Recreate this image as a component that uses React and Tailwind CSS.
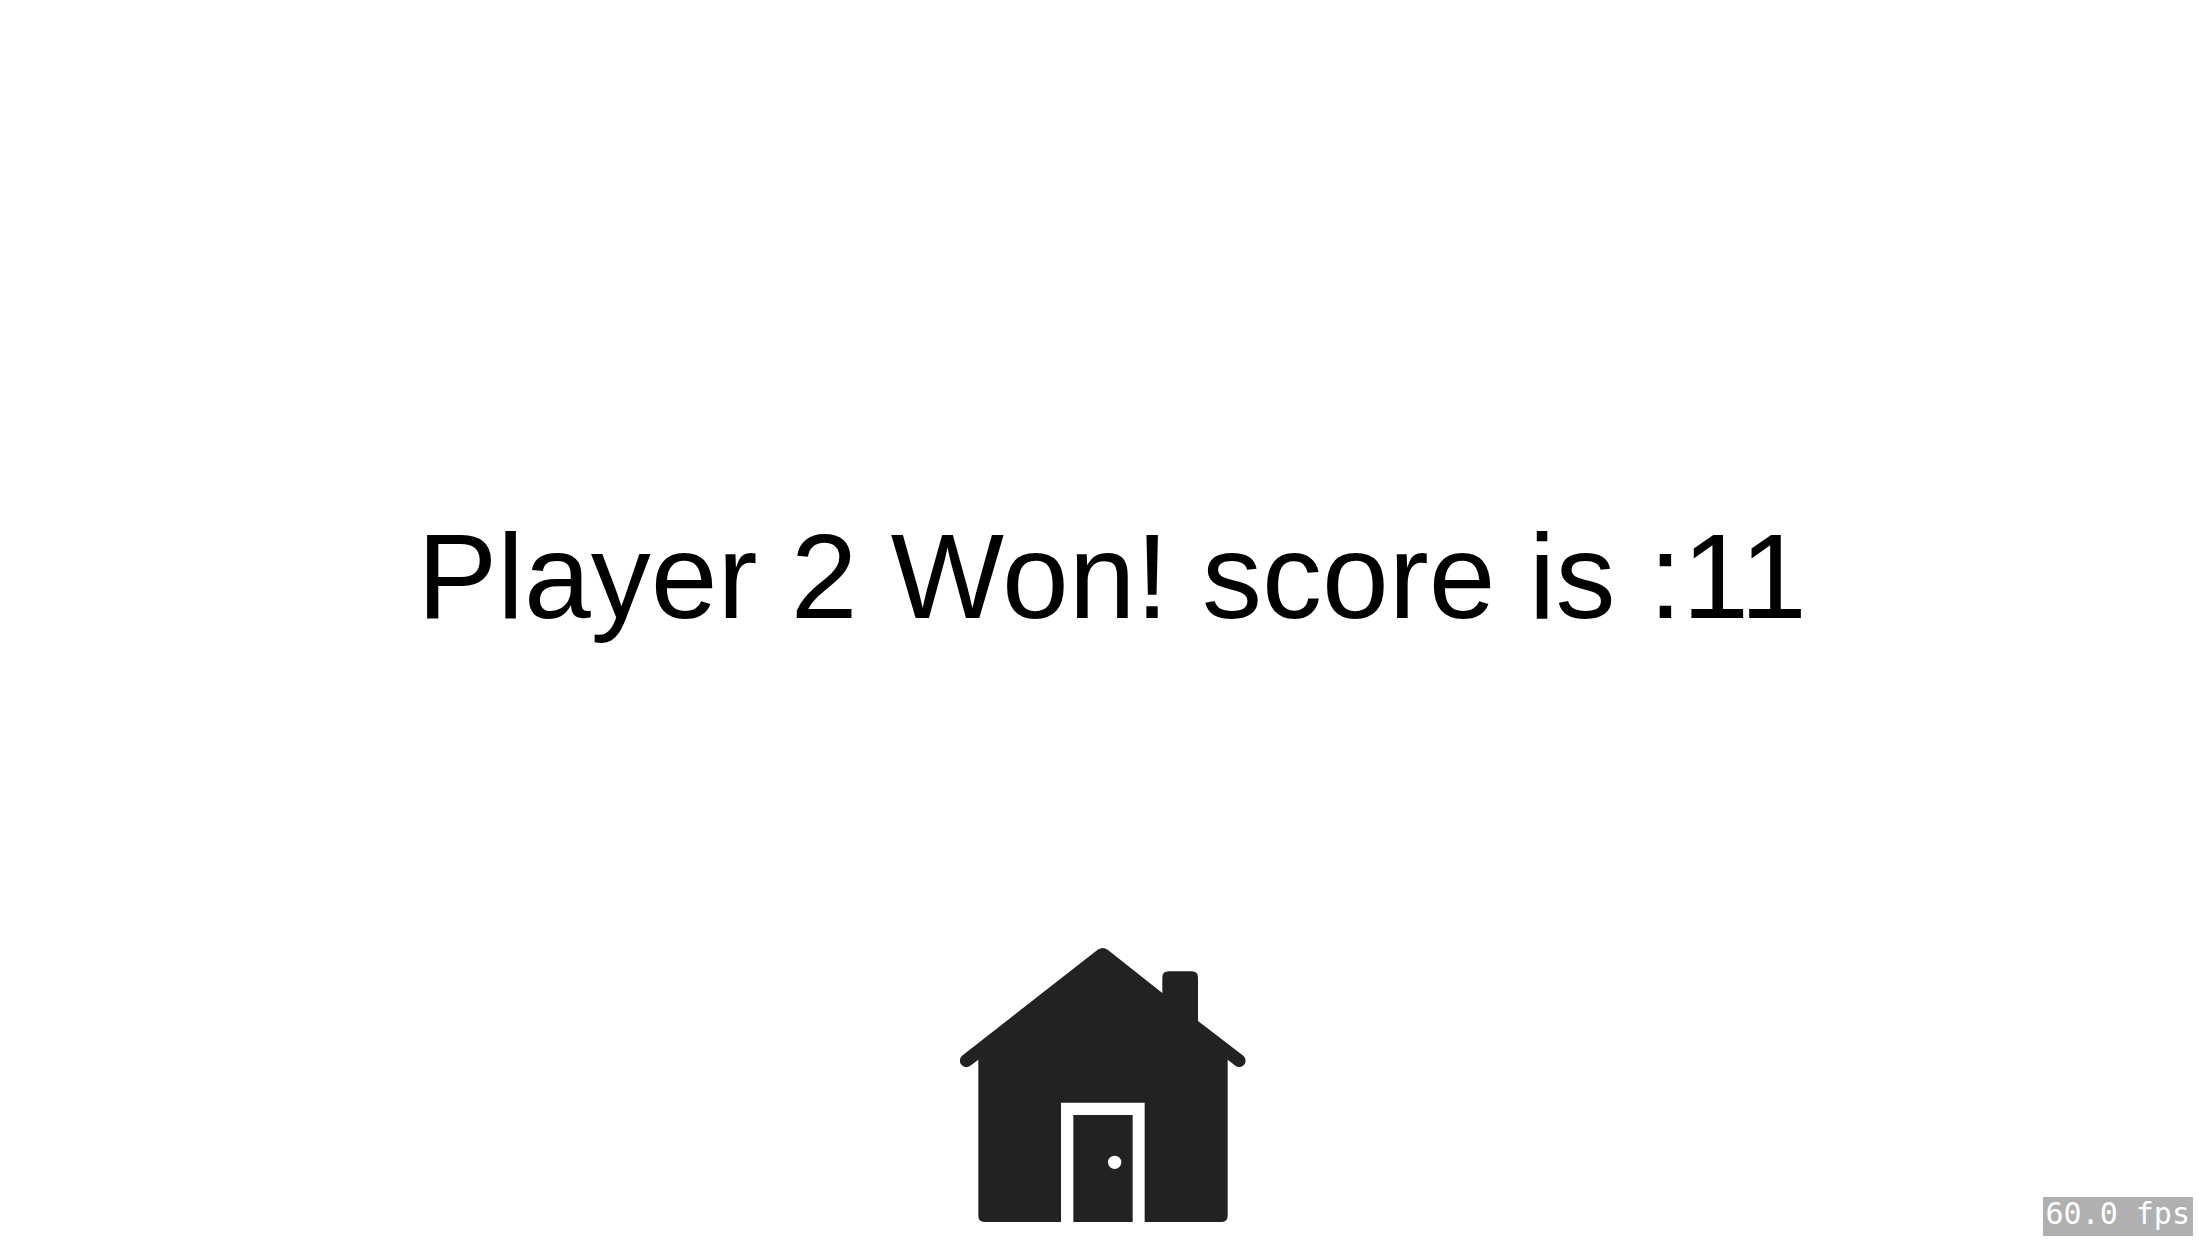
function HouseIcon() {
  return (
    <svg viewBox="60 48 864 831" className="h-[277px] w-[288px]" aria-hidden="true">
      <path
        fill="#222222"
        fillRule="evenodd"
        d="M473 59 Q488 49 503 59 L667 189 V143 Q667 124 686 124 H755 Q774 124 774 143 V273 L908 376 A19 19 0 0 1 887 408 L863 389 V857 Q863 876 842 876 H614 V518 H363 V876 H136 Q115 876 115 857 V389 L90 408 A19 19 0 0 1 68 376 Z"
      />
      <path
        fill="#222222"
        fillRule="evenodd"
        d="M400 555 H578 V876 H400 Z M524 677 a20 20 0 1 0 0 40 a20 20 0 1 0 0 -40 Z"
      />
    </svg>
  );
}

export default function App() {
  return (
    <main className="relative flex min-h-screen flex-col items-center justify-between bg-white pb-[19px] pt-[507px] font-['Liberation_Sans',Arial,sans-serif]">
      <h1 className="whitespace-nowrap pl-4 text-[120px] leading-[138px] text-black">
        Player 2 Won! score is :11
      </h1>
      <button type="button" aria-label="Home" className="cursor-pointer">
        <HouseIcon />
      </button>
      <output className="absolute bottom-1.5 right-[15px] whitespace-nowrap bg-[#b0b0b0] px-[3px] pb-1.5 font-['DejaVu_Sans_Mono',monospace] text-[30px] leading-[33px] text-white">
        60.0 fps
      </output>
    </main>
  );
}
